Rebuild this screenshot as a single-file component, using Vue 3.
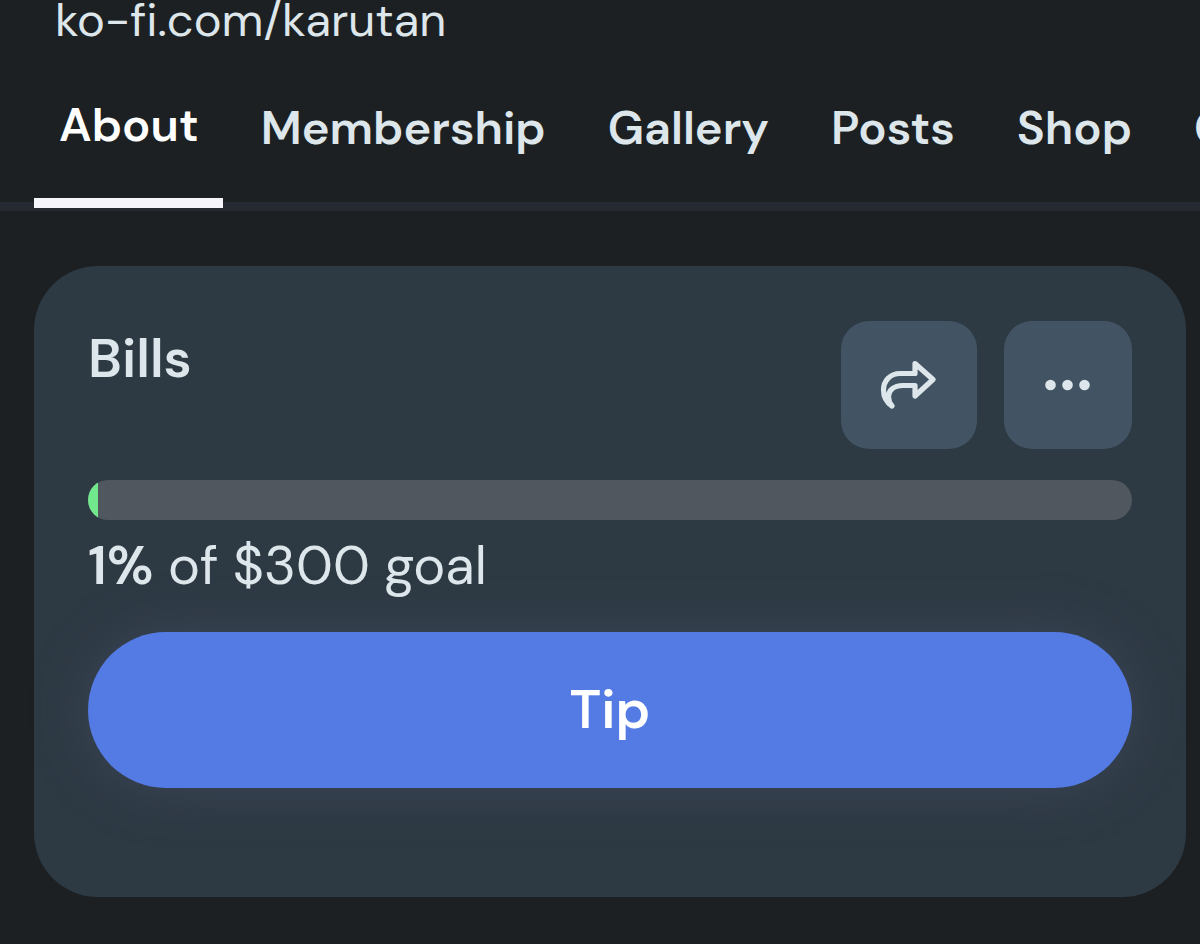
<script setup>
const tabs = ['About', 'Membership', 'Gallery', 'Posts', 'Shop', 'Commissions']
const active = 'About'
const goal = { title: 'Bills', percent: 1, target: '$300' }
</script>

<template>
  <div class="page">
    <a class="profile-url" href="#">ko-fi.com/karutan</a>
    <nav class="tabs" aria-label="Profile sections">
      <a
        v-for="tab in tabs"
        :key="tab"
        href="#"
        class="tab"
        :class="{ active: tab === active }"
        :aria-current="tab === active ? 'page' : null"
      >{{ tab }}</a>
    </nav>

    <main class="card">
      <header class="card-head">
        <h2 class="title">{{ goal.title }}</h2>
        <div class="actions">
          <button class="action share" type="button" aria-label="Share">
            <svg width="58" height="52" viewBox="0 0 58 52" fill="none" stroke="currentColor" stroke-width="5.200" stroke-linejoin="round" stroke-linecap="round" aria-hidden="true">
              <path d="M35 4.500 53 20.500 35 37V26.500H23C13.500 26.500 8.500 31.500 8.500 37.500 8.500 41 9.500 44 12 47 6 43 3.500 37 3.500 31 3.500 22 10 14.500 20 14.500H35Z" />
            </svg>
          </button>
          <button class="action" type="button" aria-label="More options">
            <svg width="46" height="12" viewBox="0 0 46 12" fill="currentColor" aria-hidden="true">
              <circle cx="5.500" cy="6" r="5.300" />
              <circle cx="22.500" cy="6" r="5.300" />
              <circle cx="39.500" cy="6" r="5.300" />
            </svg>
          </button>
        </div>
      </header>
      <div class="track" role="progressbar" aria-label="Goal progress" :aria-valuenow="goal.percent" aria-valuemin="0" aria-valuemax="100">
        <div class="fill" :style="{ width: goal.percent + '%' }"></div>
      </div>
      <p class="status"><strong>{{ goal.percent }}%</strong> of {{ goal.target }} goal</p>
      <button class="tip" type="button">Tip</button>
    </main>
  </div>
</template>

<style>
body {
  background: #1c2023;
}
</style>

<style scoped>
.page {
  box-sizing: border-box;
  min-height: 100vh;
  overflow: hidden;
  background: #1c2023;
  color: #dde6ea;
  font-family: "DM Sans", Inter, "Liberation Sans", sans-serif;
  font-variant-ligatures: none;
}

.profile-url {
  display: block;
  height: 48px;
  margin-left: 55px;
  font-size: 47px;
  line-height: 40px;
  color: inherit;
  text-decoration: none;
}

.tabs {
  display: flex;
  align-items: flex-end;
  gap: 13px;
  height: 154px;
  padding-left: 34px;
  border-bottom: 9px solid #252932;
}

.tab {
  flex: none;
  padding: 0 24px 46px 25px;
  font-size: 47px;
  font-weight: 600;
  line-height: 56px;
  color: inherit;
  text-decoration: none;
}

.tab.active {
  padding-bottom: 45px;
  margin-bottom: -6px;
  border-bottom: 10px solid #f7f5fc;
  color: #fff;
}

.card {
  margin: 55px 14px 0 34px;
  padding: 55px 54px 109px;
  border-radius: 64px;
  background: #2d3943;
}

.card-head {
  display: flex;
  align-items: flex-start;
  justify-content: space-between;
}

.title {
  margin: 6px 0 0;
  font-size: 54px;
  font-weight: 600;
  line-height: 64px;
}

.actions {
  display: flex;
  gap: 27px;
}

.action {
  display: flex;
  align-items: center;
  justify-content: center;
  width: 128px;
  height: 128px;
  padding: 0;
  border: 0;
  border-radius: 28px;
  background: #425463;
  color: #dde6ea;
}

.share {
  width: 136px;
}

.track {
  height: 40px;
  margin-top: 31px;
  border-radius: 20px;
  overflow: hidden;
  background: #50575f;
}

.fill {
  height: 100%;
  background: #72e88c;
}

.status {
  margin: 14px 0 34px;
  font-size: 54px;
  line-height: 64px;
}

.status strong {
  font-weight: 600;
}

.tip {
  display: block;
  width: 100%;
  height: 156px;
  padding: 0 0 2px;
  border: 0;
  border-radius: 78px;
  background: #547be4;
  box-shadow: 0 0 56px rgba(84, 90, 120, 0.4);
  color: #fff;
  font-family: inherit;
  font-size: 54px;
  font-weight: 600;
}
</style>
